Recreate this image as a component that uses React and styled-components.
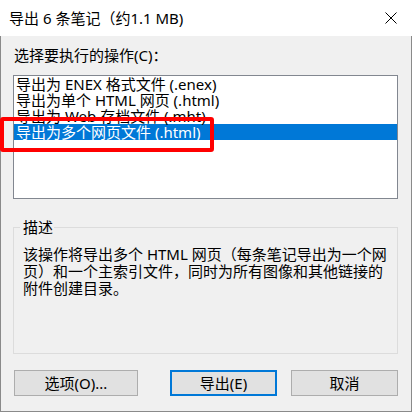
import React from "react";
import styled, { createGlobalStyle } from "styled-components";

const GlobalStyle = createGlobalStyle`
  html, body {
    margin: 0;
    padding: 0;
    background: #f0f0f0;
  }
  body {
    font-family: "Noto Sans", "Noto Sans CJK SC", sans-serif;
    color: #000;
  }
`;

const Window = styled.div`
  position: relative;
  width: 412px;
  height: 412px;
  display: flex;
  flex-direction: column;
  box-sizing: border-box;
  font-size: 15px;
`;

const TitleBar = styled.div`
  height: 36px;
  flex-shrink: 0;
  background: #fff;
  display: flex;
  align-items: center;
  justify-content: space-between;
  padding: 0 15px 0 9px;
  font-size: 15px;
  line-height: 17px;
`;

const CloseIcon = styled.svg`
  width: 12px;
  height: 12px;
  display: block;
`;

const Body = styled.div`
  flex: 1;
  background: #f0f0f0;
  border: 1px solid #8a8a8a;
  border-top: none;
  padding: 11px 13px 0 12px;
  display: flex;
  flex-direction: column;
`;

const Label = styled.div`
  line-height: 17px;
  padding-left: 1px;
`;

const ListBox = styled.ul`
  list-style: none;
  margin: 11px 0 0;
  padding: 0;
  height: 124px;
  box-sizing: border-box;
  border: 1px solid #828790;
  background: #fff;
`;

const Item = styled.li`
  height: 16px;
  line-height: 16px;
  padding-left: 2px;
  white-space: nowrap;
  background: ${(p) => (p.$selected ? "#0078d7" : "transparent")};
  color: ${(p) => (p.$selected ? "#fff" : "#000")};
`;

const Group = styled.fieldset`
  margin: 20px 0 0;
  padding: 0 9px;
  height: 135px;
  box-sizing: border-box;
  border: 1px solid #dcdcdc;
  min-width: 0;
`;

const Legend = styled.legend`
  padding: 0 1px 0 3px;
  margin-left: -3px;
  line-height: 17px;
`;

const Description = styled.div`
  margin-top: 10px;
  line-height: 17px;
`;

const Line = styled.div`
  white-space: nowrap;
`;

const ButtonRow = styled.div`
  display: flex;
  align-items: center;
  margin-top: 16px;
  padding-left: 1px;
  gap: 14px;
`;

const Button = styled.button`
  width: ${(p) => p.$width}px;
  height: 26px;
  box-sizing: border-box;
  margin: 0;
  padding: 0;
  font-family: inherit;
  font-size: 15px;
  line-height: 17px;
  color: #000;
  background: #e1e1e1;
  border: ${(p) => (p.$primary ? "2px solid #0078d7" : "1px solid #adadad")};
  margin-left: ${(p) => (p.$push ? "auto" : "0")};
`;

const Highlight = styled.div`
  position: absolute;
  left: 0;
  top: 117px;
  width: 214px;
  height: 35px;
  box-sizing: border-box;
  border: 4px solid #ff0000;
  border-radius: 3px;
  pointer-events: none;
`;

const options = [
  "导出为 ENEX 格式文件 (.enex)",
  "导出为单个 HTML 网页 (.html)",
  "导出为 Web 存档文件 (.mht)",
  "导出为多个网页文件 (.html)",
];

export default function App() {
  return (
    <>
      <GlobalStyle />
      <Window>
        <TitleBar>
          <span>导出 6 条笔记（约1.1 MB)</span>
          <CloseIcon viewBox="0 0 12 12">
            <path d="M0.5 0.5 L11.5 11.5 M11.5 0.5 L0.5 11.5" stroke="#000" strokeWidth="1" fill="none" />
          </CloseIcon>
        </TitleBar>
        <Body>
          <Label>选择要执行的操作(C)：</Label>
          <ListBox>
            {options.map((o, i) => (
              <Item key={o} $selected={i === 3}>
                {o}
              </Item>
            ))}
          </ListBox>
          <Group>
            <Legend>描述</Legend>
            <Description>
              <Line>该操作将导出多个 HTML 网页（每条笔记导出为一个网</Line>
              <Line>页）和一个主索引文件，同时为所有图像和其他链接的</Line>
              <Line>附件创建目录。</Line>
            </Description>
          </Group>
          <ButtonRow>
            <Button $width={124}>选项(O)...</Button>
            <Button $width={107} $primary $push>
              导出(E)
            </Button>
            <Button $width={107}>取消</Button>
          </ButtonRow>
        </Body>
        <Highlight />
      </Window>
    </>
  );
}
